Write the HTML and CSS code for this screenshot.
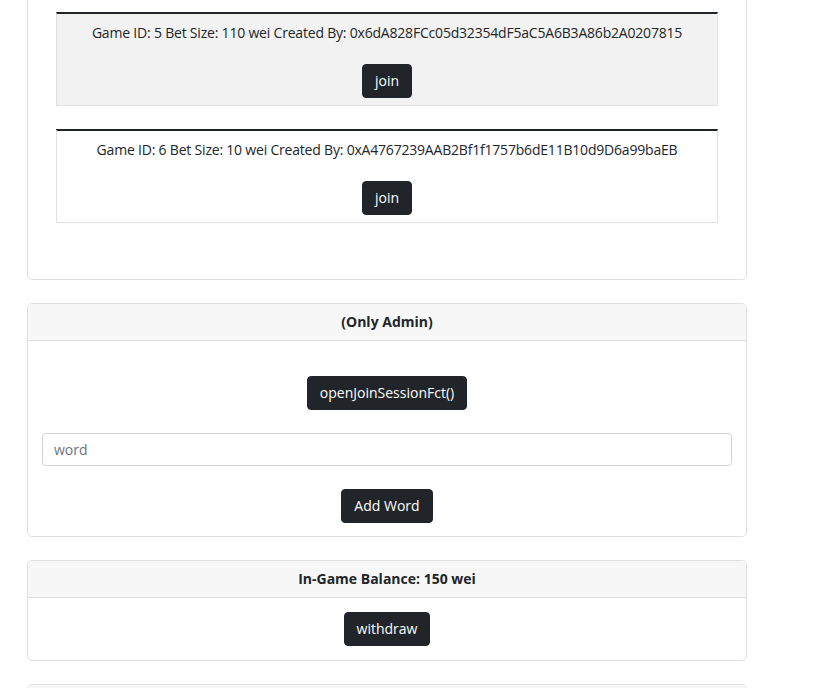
FILE: index.html
```html
<!DOCTYPE html>
<html lang="en">
<head>
<meta charset="utf-8">
<title>Game Sessions</title>
<link rel="stylesheet" href="styles.css">
</head>
<body>
<div class="page">
  <section class="card">
    <div class="card-header">Open Games</div>
    <div class="card-body games">
      <h3 class="games-title">Sessions Available Currently</h3>
      <div class="game game-striped">
        <p class="game-info">Game ID: 5 Bet Size: 110 wei Created By: 0x6dA828FCc05d32354dF5aC5A6B3A86b2A0207815</p>
        <button class="btn">join</button>
      </div>
      <div class="game">
        <p class="game-info">Game ID: 6 Bet Size: 10 wei Created By: 0xA4767239AAB2Bf1f1757b6dE11B10d9D6a99baEB</p>
        <button class="btn">join</button>
      </div>
    </div>
  </section>

  <section class="card">
    <div class="card-header">(Only Admin)</div>
    <div class="card-body admin">
      <button class="btn">openJoinSessionFct()</button>
      <input class="form-control" type="text" placeholder="word">
      <button class="btn">Add Word</button>
    </div>
  </section>

  <section class="card">
    <div class="card-header">In-Game Balance: 150 wei</div>
    <div class="card-body balance">
      <button class="btn">withdraw</button>
    </div>
  </section>

  <section class="card">
    <div class="card-header">History</div>
    <div class="card-body balance">
      <button class="btn">refresh</button>
    </div>
  </section>
</div>
</body>
</html>
```

FILE: styles.css
```css
* {
  box-sizing: border-box;
}

html, body {
  margin: 0;
  padding: 0;
  background: #fff;
}

body {
  font-family: "Open Sans", "Noto Sans", sans-serif;
  font-size: 14px;
  line-height: 21px;
  color: #212529;
}

.page {
  margin-top: -72px;
  padding-left: 27px;
  width: 747px;
}

.card {
  width: 720px;
  border: 1px solid #dfdfdf;
  border-radius: 5px;
  margin-bottom: 23px;
  background: #fff;
  overflow: hidden;
}

.card-header {
  background: #f7f7f7;
  border-bottom: 1px solid #dfdfdf;
  padding: 7px 14px 8px;
  text-align: center;
  font-weight: 700;
}

.card-body {
  padding: 14px;
}

.games {
  padding: 14px 28px 56px;
  display: flex;
  flex-direction: column;
  gap: 23px;
}

.games-title {
  margin: 0 0 -12px;
  font-size: 14px;
  line-height: 21px;
  font-weight: 700;
  text-align: center;
}

.game {
  border: 1px solid #dee2e6;
  border-top: 2px solid #212529;
  padding: 8px 8px 7px;
  display: flex;
  flex-direction: column;
  align-items: center;
}

.game-striped {
  background: #f2f2f2;
}

.game-info {
  margin: 0 0 21px;
  text-align: center;
  letter-spacing: -0.2px;
}

.btn {
  font-family: inherit;
  font-size: 14px;
  line-height: 20px;
  color: #fff;
  background: #212529;
  border: 1px solid #212529;
  border-radius: 4px;
  padding: 6px 12px;
  cursor: pointer;
}

.admin {
  padding-top: 35px;
  padding-bottom: 13px;
  display: flex;
  flex-direction: column;
  align-items: center;
  gap: 23px;
}

.form-control {
  width: 100%;
  height: 33px;
  font-family: inherit;
  font-size: 14px;
  color: #212529;
  padding: 6px 11px;
  border: 1px solid #ced4da;
  border-radius: 4px;
  background: #fff;
}

.form-control::placeholder {
  color: #6c757d;
}

.balance {
  display: flex;
  justify-content: center;
}
```
